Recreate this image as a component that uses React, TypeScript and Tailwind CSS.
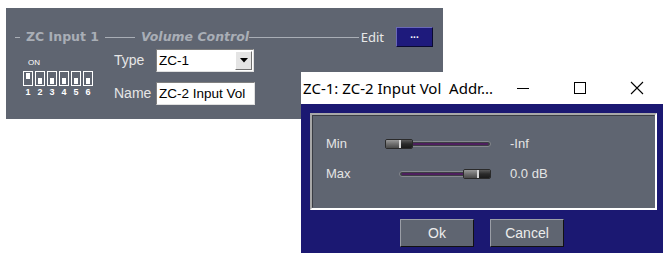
import React from "react";

const sans = { fontFamily: '"DejaVu Sans", Verdana, sans-serif' };
const arial = { fontFamily: '"Liberation Sans", Arial, sans-serif' };
const ui = { fontFamily: '"Noto Sans", "Open Sans", sans-serif' };

function DipSwitches() {
  const on = [true, false, false, false, false, false];
  return (
    <div className="flex flex-col w-[74px]">
      <div className="text-[8px] leading-none text-white pl-[5px] mb-[4px]" style={arial}>ON</div>
      <div className="flex gap-[2px]">
        {on.map((v, i) => (
          <div key={i} className={`w-[10px] h-[15px] border border-white flex justify-center ${v ? "items-start pt-[1px]" : "items-end pb-[1px]"}`}>
            <div className="w-[4px] h-[6px] bg-white" />
          </div>
        ))}
      </div>
      <div className="flex gap-[2px] mt-[2px]">
        {on.map((_, i) => (
          <div key={i} className="w-[10px] text-center text-[9px] leading-none text-white font-bold" style={arial}>{i + 1}</div>
        ))}
      </div>
    </div>
  );
}

function Slider({ width, thumbLeft }: { width: number; thumbLeft: boolean }) {
  return (
    <div className="relative h-[10px] flex items-center" style={{ width }}>
      <div className="w-full h-[6px] rounded-[3px] bg-[#3c3e44] border border-[#85888e] flex items-center px-[2px]">
        <div className="w-full h-[2px] bg-[#4e1f5e]" />
      </div>
      <div className={`absolute top-0 ${thumbLeft ? "left-0" : "right-0"} w-[28px] h-[10px] rounded-[2px] flex overflow-hidden border border-[#2a2a2a]`}>
        <div className="w-[13px] h-full bg-gradient-to-b from-[#9a9a9a] via-[#6e6e6e] to-[#4a4a4a]" />
        <div className="w-[2px] h-full bg-[#d8d8d8]" />
        <div className="flex-1 h-full bg-gradient-to-b from-[#5a5a5a] via-[#2a2a2a] to-[#1a1a1a]" />
      </div>
    </div>
  );
}

export default function App() {
  return (
    <div className="relative w-[669px] h-[259px] bg-white overflow-hidden">
      {/* main panel */}
      <div className="ml-[6px] mt-[8px] w-[437px] h-[111px] bg-[#5f6571]">
        <div className="flex items-center pt-[20px] pl-[9px] pr-[10px] h-[38px]">
          <div className="w-[5px] h-px bg-[#a9aeb6]" />
          <span className="ml-[6px] text-[12.5px] font-bold text-[#a9aeb6] leading-none" style={sans}>ZC Input 1</span>
          <div className="ml-[6px] w-[30px] h-px bg-[#a9aeb6]" />
          <span className="ml-[6px] text-[12.5px] font-bold italic text-[#a9aeb6] leading-none" style={sans}>Volume Control</span>
          <div className="flex-1 h-px bg-[#a9aeb6]" />
          <span className="ml-[2px] text-[13px] text-[#e8e8e8] leading-none" style={ui}>Edit</span>
          <button className="ml-[12px] w-[37px] h-[20px] bg-[#1e1a7c] border border-t-[#6a68b8] border-l-[#6a68b8] border-r-[#0a0a30] border-b-[#0a0a30] text-white text-[10px] leading-none font-bold pb-[4px]" style={arial}>...</button>
        </div>
        <div className="flex pl-[17px] mt-[3px]">
          <div className="mt-[10px]">
            <DipSwitches />
          </div>
          <div className="ml-[17px] flex flex-col gap-[10px]">
            <div className="flex items-center">
              <span className="w-[42px] text-[14px] text-[#e6e6e6]" style={arial}>Type</span>
              <div className="w-[98px] h-[23px] bg-white border border-t-[#808080] border-l-[#808080] border-r-[#e0e0e0] border-b-[#e0e0e0] flex items-center">
                <span className="flex-1 pl-[2px] text-[13.5px] text-black leading-none" style={arial}>ZC-1</span>
                <div className="w-[17px] h-[19px] mr-[1px] bg-[#e4e4e4] border border-t-white border-l-white border-r-[#707070] border-b-[#707070] flex items-center justify-center">
                  <svg width="8" height="5" viewBox="0 0 8 5"><path d="M0 0H8L4 4.5Z" fill="#000" /></svg>
                </div>
              </div>
            </div>
            <div className="flex items-center">
              <span className="w-[42px] text-[14px] text-[#e6e6e6]" style={arial}>Name</span>
              <div className="w-[99px] h-[23px] bg-white border border-t-[#808080] border-l-[#808080] border-r-[#e0e0e0] border-b-[#e0e0e0] flex items-center">
                <span className="pl-[2px] text-[13.5px] text-black leading-none whitespace-nowrap" style={arial}>ZC-2 Input Vol</span>
              </div>
            </div>
          </div>
        </div>
      </div>

      {/* dialog window */}
      <div className="absolute left-[301px] top-[72px] w-[368px]">
        <div className="h-[32px] bg-white flex items-center pr-[4px]">
          <span className="pl-[2px] text-[15px] text-black whitespace-nowrap" style={ui}>ZC-1: ZC-2 Input Vol&nbsp; Addr...</span>
          <div className="ml-auto flex items-center">
            <div className="w-[57px] flex justify-center"><div className="w-[12px] h-px bg-black" /></div>
            <div className="w-[57px] flex justify-center"><div className="w-[12px] h-[12px] border border-black" /></div>
            <div className="w-[57px] flex justify-center">
              <svg width="14" height="14" viewBox="0 0 14 14"><path d="M1 1L13 13M13 1L1 13" stroke="#000" strokeWidth="1.1" /></svg>
            </div>
          </div>
        </div>
        <div className="w-[362px] h-[149px] bg-[#1b1872] pt-[9px] pl-[9px]">
          <div className="w-[347px] h-[97px] border-2 border-t-[#a8a8a8] border-l-[#a8a8a8] border-r-white border-b-white">
            <div className="w-full h-full bg-[#5f6571] border border-t-[#3a3d44] border-l-[#3a3d44] border-r-[#5f6571] border-b-[#5f6571] pl-[13px] pt-[20px]" style={arial}>
              <div className="flex items-center h-[16px]">
                <span className="w-[59px] text-[13px] text-[#e4e4e4]">Min</span>
                <Slider width={106} thumbLeft />
                <span className="ml-[19px] text-[13px] text-[#e4e4e4]">-Inf</span>
              </div>
              <div className="flex items-center h-[16px] mt-[14px]">
                <span className="w-[73px] text-[13px] text-[#e4e4e4]">Max</span>
                <Slider width={92} thumbLeft={false} />
                <span className="ml-[19px] text-[13px] text-[#e4e4e4]">0.0 dB</span>
              </div>
            </div>
          </div>
          <div className="flex mt-[9px] pl-[90px] gap-[16px]">
            <button className="w-[74px] h-[28px] bg-[#5f6571] border border-t-[#9a9ea6] border-l-[#9a9ea6] border-r-[#111] border-b-[#111] text-[14px] text-[#ececec]" style={arial}>Ok</button>
            <button className="w-[74px] h-[28px] bg-[#5f6571] border border-t-[#9a9ea6] border-l-[#9a9ea6] border-r-[#111] border-b-[#111] text-[14px] text-[#ececec]" style={arial}>Cancel</button>
          </div>
        </div>
      </div>
    </div>
  );
}
